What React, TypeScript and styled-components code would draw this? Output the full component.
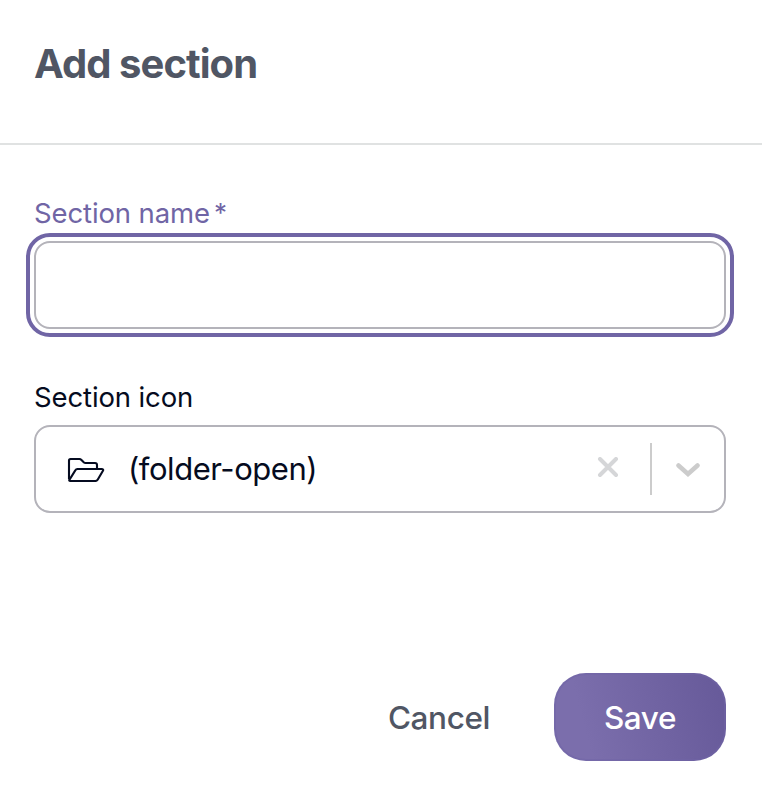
import React from "react";
import styled, { createGlobalStyle } from "styled-components";

const GlobalStyle = createGlobalStyle`
  * { box-sizing: border-box; }
  body { margin: 0; background: #fff; font-family: Inter, sans-serif; }
`;

const Dialog = styled.form`
  display: flex;
  flex-direction: column;
  height: 798px;
  background: #fff;
  color: #050b20;
`;

const Header = styled.header`
  height: 145px;
  padding: 40px 34px 0;
  border-bottom: 2px solid #e0e2e2;
`;

const Title = styled.h1`
  margin: 0;
  font-size: 40px;
  line-height: 48px;
  font-weight: 700;
  letter-spacing: -0.95px;
  color: #505664;
`;

const Body = styled.div`
  display: flex;
  flex-direction: column;
  padding: 49px 36px 0 34px;
`;

const Label = styled.label<{ $active?: boolean }>`
  display: flex;
  gap: 5px;
  height: 47px;
  line-height: 38px;
  font-size: 27.5px;
  letter-spacing: -0.12px;
  color: ${(p) => (p.$active ? "#7065a5" : "#050b20")};
`;

const Required = styled.span`
  margin-left: -1px;
  font-size: 26px;
`;

const TextInput = styled.input`
  height: 88px;
  padding: 0 28px;
  border: 2px solid #b4b3ba;
  border-radius: 16px;
  outline: 4px solid #7065a5;
  outline-offset: 4px;
  background: #fff;
  font: 32px Inter, sans-serif;
  margin-bottom: 49px;
  caret-color: transparent;
`;

const Select = styled.div`
  display: flex;
  align-items: center;
  height: 88px;
  padding: 0 24px 0 31px;
  border: 2px solid #b4b3ba;
  border-radius: 16px;
`;

const Value = styled.span`
  flex: 1;
  margin-left: 23px;
  font-size: 31px;
  line-height: 40px;
  letter-spacing: -0.45px;
`;

const Divider = styled.span`
  width: 2px;
  height: 52px;
  margin: 0 24px 0 30px;
  background: #ccc;
`;

const Footer = styled.footer`
  display: flex;
  justify-content: flex-end;
  margin-top: auto;
  padding: 0 36px 37px;
`;

const Button = styled.button<{ $primary?: boolean }>`
  width: ${(p) => (p.$primary ? 172 : 230)}px;
  height: 88px;
  padding: 1px 0 0;
  border: ${(p) => (p.$primary ? "2px solid #7064a580" : "0")};
  border-radius: 32px;
  background: ${(p) =>
    p.$primary ? "linear-gradient(75deg, #7b6eac 20%, #665999 100%) border-box" : "transparent"};
  color: ${(p) => (p.$primary ? "#fff" : "#505664")};
  font: 500 31.5px/40px Inter, sans-serif;
  letter-spacing: -0.4px;
`;

const FolderOpen = () => (
  <svg width="38" height="26" viewBox="0 0 38 26" fill="none" stroke="#050b20" strokeWidth="2.1" strokeLinejoin="round">
    <path d="M2 23V4.5Q2 3 3.5 3H12.5Q13.5 3 14.2 3.7L17 6.5Q17.6 7 18.5 7H28Q30 7 30 9V13" />
    <path d="M2 24.5L8.3 14.4Q9 13 10.5 13H34.5Q37 13 35.8 15L30.8 23.5Q30 25 28.3 25H3.5Q2 25 2 23.5" />
  </svg>
);

const Clear = () => (
  <svg width="24" height="24" viewBox="0 0 24 24" fill="none" stroke="#d5d6d8" strokeWidth="4" strokeLinecap="round">
    <path d="M4 2L20 18M20 2L4 18" />
  </svg>
);

const Chevron = () => (
  <svg width="24" height="16" viewBox="0 0 24 16" fill="none" stroke="#ccc" strokeWidth="4.5" strokeLinecap="round">
    <path d="M2.5 4.5L12 13L21.5 4.5" />
  </svg>
);

export default function App() {
  return (
    <>
      <GlobalStyle />
      <Dialog>
        <Header>
          <Title>Add section</Title>
        </Header>
        <Body>
          <Label $active htmlFor="name">
            <span>Section name</span>
            <Required>*</Required>
          </Label>
          <TextInput id="name" />
          <Label>Section icon</Label>
          <Select>
            <FolderOpen />
            <Value>(folder-open)</Value>
            <Clear />
            <Divider />
            <Chevron />
          </Select>
        </Body>
        <Footer>
          <Button type="button">Cancel</Button>
          <Button type="button" $primary>
            Save
          </Button>
        </Footer>
      </Dialog>
    </>
  );
}
